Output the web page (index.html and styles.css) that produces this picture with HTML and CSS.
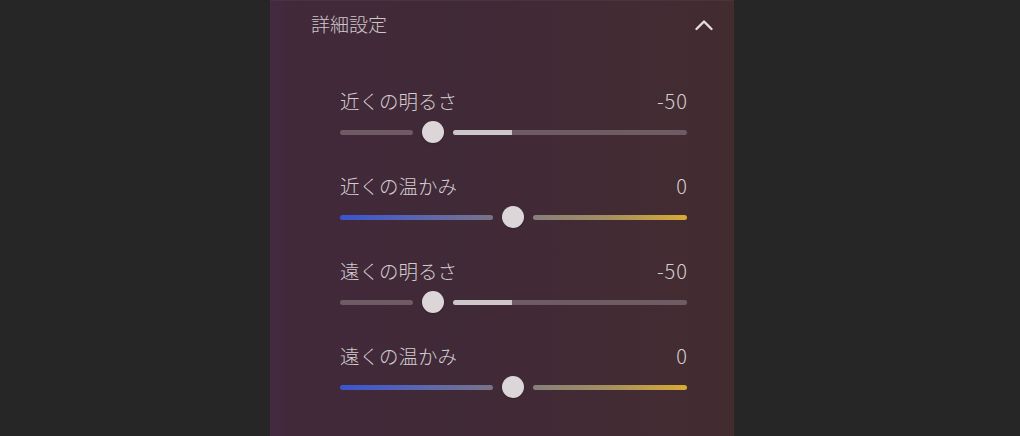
FILE: index.html
```html
<!DOCTYPE html>
<html lang="ja">
<head>
<meta charset="utf-8">
<link rel="stylesheet" href="styles.css">
</head>
<body>
<div class="panel">
  <div class="header">
    <span class="title">詳細設定</span>
    <svg class="chevron" width="18" height="12" viewBox="0 0 18 12"><polyline points="1.5,10 9,2.5 16.5,10" fill="none" stroke="#e2dcde" stroke-width="2.4" stroke-linecap="round" stroke-linejoin="round"/></svg>
  </div>
  <div class="rows">
    <div class="row">
      <div class="label-line"><span>近くの明るさ</span><span class="value">-50</span></div>
      <div class="slider">
        <div class="seg dim" style="width:73px"></div>
        <div class="thumb"></div>
        <div class="seg bright" style="--fill:59px"></div>
      </div>
    </div>
    <div class="row">
      <div class="label-line"><span>近くの温かみ</span><span class="value">0</span></div>
      <div class="slider">
        <div class="seg cool" style="width:153px"></div>
        <div class="thumb"></div>
        <div class="seg warm"></div>
      </div>
    </div>
    <div class="row">
      <div class="label-line"><span>遠くの明るさ</span><span class="value">-50</span></div>
      <div class="slider">
        <div class="seg dim" style="width:73px"></div>
        <div class="thumb"></div>
        <div class="seg bright" style="--fill:59px"></div>
      </div>
    </div>
    <div class="row">
      <div class="label-line"><span>遠くの温かみ</span><span class="value">0</span></div>
      <div class="slider">
        <div class="seg cool" style="width:153px"></div>
        <div class="thumb"></div>
        <div class="seg warm"></div>
      </div>
    </div>
  </div>
</div>
</body>
</html>
```
FILE: styles.css
```css
html, body {
  margin: 0;
  padding: 0;
  background: #262626;
  height: 436px;
  overflow: hidden;
}
body {
  font-family: "Noto Sans CJK JP", "Noto Sans", sans-serif;
  font-weight: 300;
  color: #d3ccd0;
}
.panel {
  margin-left: 270px;
  width: 464px;
  height: 436px;
  background: linear-gradient(90deg, #442a41 0px, #41293a 22px, #412a36 240px, #432c30 464px);
  box-sizing: border-box;
  border-top: 1px solid #483340;
}
.header {
  display: flex;
  align-items: center;
  justify-content: space-between;
  padding: 11px 21px 0 41px;
  height: 24px;
}
.title {
  font-size: 19px;
  line-height: 24px;
  color: #cfc7cb;
}
.chevron {
  display: block;
  margin-top: 1px;
}
.rows {
  display: flex;
  flex-direction: column;
  gap: 31px;
  padding: 53px 47px 0 70px;
}
.row {
  display: flex;
  flex-direction: column;
  gap: 8px;
}
.label-line {
  display: flex;
  justify-content: space-between;
  font-size: 19.5px;
  line-height: 24px;
  height: 24px;
}
.value {
  font-size: 20px;
  letter-spacing: 1px;
  margin-right: -1px;
}
.slider {
  display: flex;
  align-items: center;
  gap: 9px;
  height: 22px;
}
.seg {
  height: 5px;
  border-radius: 3px;
  flex: none;
}
.seg.bright, .seg.warm {
  flex: 1;
}
.dim {
  background: #6e5b63;
}
.bright {
  background: linear-gradient(90deg, #cdc7ca 0, #cdc7ca var(--fill), #6e5b63 var(--fill), #6e5b63 100%);
}
.cool {
  background: linear-gradient(90deg, #3a54cd 0%, #5664b4 45%, #7a7389 100%);
}
.warm {
  background: linear-gradient(90deg, #86807b 0%, #a6905f 50%, #d9aa33 100%);
}
.thumb {
  width: 22px;
  height: 22px;
  border-radius: 50%;
  background: #dcd6d9;
  flex: none;
  box-shadow: 0 1px 2px rgba(0,0,0,0.25);
}
```
